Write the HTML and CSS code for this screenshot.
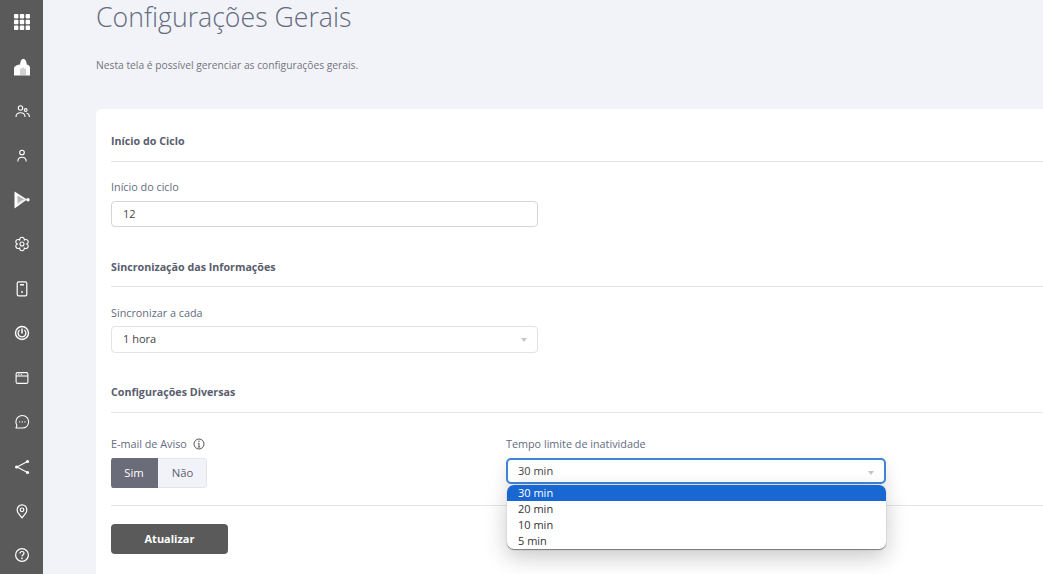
FILE: index.html
```html
<html>
<head>
    <title>Configurações Gerais</title>
    <link rel="stylesheet" href="styles.css">
</head>

<body>
    <nav class="sidebar">
        <a class="nav-item"><svg width="18" height="18" viewBox="0 0 18 18" fill="#fff"><rect x="1" y="1" width="4.4" height="4.4" rx=".8"/><rect x="6.8" y="1" width="4.4" height="4.4" rx=".8"/><rect x="12.6" y="1" width="4.4" height="4.4" rx=".8"/><rect x="1" y="6.8" width="4.4" height="4.4" rx=".8"/><rect x="6.8" y="6.8" width="4.4" height="4.4" rx=".8"/><rect x="12.6" y="6.8" width="4.4" height="4.4" rx=".8"/><rect x="1" y="12.6" width="4.4" height="4.4" rx=".8"/><rect x="6.8" y="12.6" width="4.4" height="4.4" rx=".8"/><rect x="12.6" y="12.6" width="4.4" height="4.4" rx=".8"/></svg></a>
        <a class="nav-item"><svg width="18" height="18" viewBox="0 0 18 18" fill="#fff"><path d="M1 17.5V10C1 8.5 3 7 7 6.5C7.3 3 8.5 .7 10.3 .7C12.2 .7 13.5 3 13.8 6.5C16 7 17 8 17 10V17.5Z"/><path d="M7.6 17.5V10.5H8.4V17.5ZM9.6 17.5V9.5H10.4V17.5ZM11.6 17.5V10.5H12.4V17.5Z" fill="#8f8f8f"/></svg></a>
        <a class="nav-item"><svg width="18" height="18" viewBox="0 0 18 18" fill="none" stroke="#fff" stroke-width="1.1"><circle cx="7.5" cy="6" r="2.2"/><path d="M3 15C3 12.2 5 10.8 7.5 10.8C10 10.8 12 12.2 12 15"/><circle cx="12.7" cy="8" r="1.4"/><path d="M13.5 11.2C15.4 11.4 16.4 12.8 16.4 15"/></svg></a>
        <a class="nav-item"><svg width="18" height="18" viewBox="0 0 18 18" fill="none" stroke="#fff" stroke-width="1.1"><circle cx="9" cy="5.5" r="2.3"/><path d="M4.8 14.5C4.8 11.6 6.5 10.2 9 10.2C11.5 10.2 13.2 11.6 13.2 14.5"/></svg></a>
        <a class="nav-item"><svg width="18" height="18" viewBox="0 0 18 18" fill="#fff"><path d="M1.5 .5L14 8.5L1.5 17.5Z"/><path d="M4.5 4.5L12 8.8L4.5 13.5Z" fill="#b5b5b5"/><path d="M4.5 12.5L11 8.8" stroke="#fff" stroke-width=".8"/><circle cx="15" cy="8.8" r="1.7"/></svg></a>
        <a class="nav-item"><svg width="18" height="18" viewBox="0 0 18 18" fill="none" stroke="#fff" stroke-width="1.1"><path d="M11.2 5.2A2.3 2.3 0 1 1 13.4 9A2.3 2.3 0 1 1 11.2 12.8A2.3 2.3 0 1 1 6.8 12.8A2.3 2.3 0 1 1 4.6 9A2.3 2.3 0 1 1 6.8 5.2A2.3 2.3 0 1 1 11.2 5.2Z" stroke-linejoin="round"/><circle cx="9" cy="9" r="2"/></svg></a>
        <a class="nav-item"><svg width="18" height="18" viewBox="0 0 18 18" fill="none" stroke="#fff" stroke-width="1.2"><rect x="4.2" y="1.8" width="9.6" height="14" rx="1.4"/><path d="M7 4.8H11" stroke-width="1.5"/><circle cx="9" cy="12" r=".9" fill="#fff" stroke="none"/></svg></a>
        <a class="nav-item"><svg width="18" height="18" viewBox="0 0 18 18" fill="none" stroke="#fff"><circle cx="9" cy="9" r="6.5" stroke-width="1.4"/><path d="M6.6 6A3.9 3.9 0 1 0 11.4 6" stroke-width="1.3"/><path d="M9 4.6V9.6" stroke-width="1.5"/></svg></a>
        <a class="nav-item"><svg width="18" height="18" viewBox="0 0 18 18" fill="none" stroke="#fff" stroke-width="1.1"><rect x="3.1" y="3.6" width="11.8" height="10.8" rx="1.5"/><path d="M3.1 7H14.9"/><path d="M5 5.3H6.5M7.6 5.3H9.2" stroke-width=".9"/></svg></a>
        <a class="nav-item"><svg width="18" height="18" viewBox="0 0 18 18" fill="none" stroke="#fff" stroke-width="1.1"><path d="M9.3 2.5C13 2.5 15.6 5.2 15.6 8.8C15.6 12.4 13 15 9.3 15H3L3.9 12.3C3.2 11.2 2.9 10.1 2.9 8.8C2.9 5.2 5.7 2.5 9.3 2.5Z" stroke-linejoin="round"/><path d="M6.2 8.8H7.2M8.8 8.8H9.8M11.4 8.8H12.4" stroke-width="1.3"/></svg></a>
        <a class="nav-item"><svg width="18" height="18" viewBox="0 0 18 18" fill="#fff" stroke="#fff"><path d="M14.5 3.5L4 9L14.5 14.5" fill="none" stroke-width="1.1"/><circle cx="14.5" cy="3.5" r="1.6" stroke="none"/><circle cx="3.6" cy="9" r="1.6" stroke="none"/><circle cx="14.5" cy="14.5" r="1.6" stroke="none"/></svg></a>
        <a class="nav-item"><svg width="18" height="18" viewBox="0 0 18 18" fill="none" stroke="#fff" stroke-width="1.2"><path d="M9 15.8L5.6 11.6C4.7 10.5 4.2 9.4 4.2 7.9C4.2 5 6.3 2.8 9 2.8C11.7 2.8 13.8 5 13.8 7.9C13.8 9.4 13.3 10.5 12.4 11.6Z" stroke-linejoin="round"/><circle cx="9" cy="7.8" r="1.8"/></svg></a>
        <a class="nav-item"><svg width="18" height="18" viewBox="0 0 18 18" fill="none" stroke="#fff" stroke-width="1.2"><circle cx="9" cy="9" r="6.4"/><path d="M7 7.4C7 6.2 7.9 5.5 9 5.5C10.1 5.5 11 6.2 11 7.3C11 8.7 9 8.7 9 10.4"/><circle cx="9" cy="12.3" r=".9" fill="#fff" stroke="none"/></svg></a>
    </nav>

    <main class="content">
        <h1 class="page-title">Configurações Gerais</h1>
        <p class="page-desc">Nesta tela é possível gerenciar as configurações gerais.</p>

        <div class="card">
            <h2 class="section-title first">Início do Ciclo</h2>
            <label class="field-label">Início do ciclo</label>
            <div class="input">12</div>

            <h2 class="section-title sync">Sincronização das Informações</h2>
            <label class="field-label sync">Sincronizar a cada</label>
            <div class="input select-box">1 hora <span class="caret"></span></div>

            <h2 class="section-title misc">Configurações Diversas</h2>
            <div class="two-cols">
                <div>
                    <label class="field-label">E-mail de Aviso
                        <svg class="info" width="12" height="12" viewBox="0 0 12 12" fill="none" stroke="#555"><circle cx="6" cy="6" r="5"/><path d="M6 5.2V9M4.8 9H7.2M5 5.2H6"/><circle cx="6" cy="3.3" r=".7" fill="#555" stroke="none"/></svg>
                    </label>
                    <div class="toggle">
                        <span class="toggle-opt active">Sim</span>
                        <span class="toggle-opt">Não</span>
                    </div>
                </div>
                <div class="timeout">
                    <label class="field-label">Tempo limite de inatividade</label>
                    <div class="input select-box open">30 min <span class="caret"></span></div>
                    <ul class="dropdown">
                        <li class="selected">30 min</li>
                        <li>20 min</li>
                        <li>10 min</li>
                        <li>5 min</li>
                    </ul>
                </div>
            </div>
            <hr class="divider">
            <button class="btn-update">Atualizar</button>
        </div>
    </main>
</body>
</html>
```

FILE: styles.css
```css
html, body {
    height: 100%;
}

body {
    margin: 0;
    display: flex;
    overflow: hidden;
    background-color: #f2f3f8;
    font-family: "Open Sans", sans-serif;
    font-size: 11px;
    color: #444;
}

.sidebar {
    width: 43px;
    flex-shrink: 0;
    background-color: #5a5a5a;
    display: flex;
    flex-direction: column;
}

.nav-item {
    height: 44.45px;
    flex-shrink: 0;
    display: flex;
    align-items: center;
    justify-content: center;
}

.content {
    flex: 1;
    min-width: 0;
    padding-left: 53px;
    overflow: hidden;
}

.page-title {
    margin: 0;
    font-size: 26.7px;
    line-height: 33px;
    font-weight: 300;
    color: #646c7e;
}

.page-desc {
    margin: 24px 0 0;
    font-size: 10.27px;
    line-height: 16px;
    color: #74747c;
}

.card {
    margin-top: 36px;
    height: 600px;
    padding: 22px 0 0 15px;
    box-sizing: border-box;
    background-color: #fff;
    border-radius: 6px 0 0 0;
}

.section-title {
    margin: 0;
    padding-top: 1px;
    padding-bottom: 10px;
    border-bottom: 1px solid #e4e5e9;
    font-size: 10.7px;
    line-height: 19px;
    font-weight: 700;
    color: #595d6e;
}

.section-title.sync {
    margin-top: 30px;
    padding-bottom: 9px;
}

.section-title.misc {
    margin-top: 29px;
}

.field-label {
    display: block;
    margin-top: 17px;
    margin-bottom: 6px;
    font-size: 10.8px;
    line-height: 16px;
    color: #646c7e;
}

.field-label.sync {
    margin-top: 18px;
    margin-bottom: 5px;
}

.info {
    margin-left: 3px;
    vertical-align: -2px;
}

.input {
    width: 427px;
    height: 26px;
    box-sizing: border-box;
    border: 1px solid #d4d5da;
    border-radius: 4px;
    padding-left: 11px;
    line-height: 24px;
    font-size: 11px;
    color: #444;
    position: relative;
    background-color: #fff;
}

.select-box {
    height: 27px;
    border-color: #e2e3e9;
}

.caret {
    position: absolute;
    right: 10px;
    top: 11px;
    border-left: 3.5px solid transparent;
    border-right: 3.5px solid transparent;
    border-top: 4px solid #c4c6cf;
}

.two-cols {
    display: grid;
    grid-template-columns: 395px 380px;
    margin-top: 6px;
}

.timeout {
    position: relative;
}

.timeout .input {
    width: 380px;
    height: 26px;
    border: 2px solid #3f83d4;
    line-height: 21px;
    padding-left: 10px;
    border-radius: 5px;
    box-shadow: 0 6px 16px rgba(0, 0, 0, 0.12);
}

.dropdown {
    position: absolute;
    left: 1px;
    width: 379px;
    margin: 1px 0 0;
    padding: 0;
    list-style: none;
    background-color: #fff;
    border-radius: 7px;
    box-shadow: 0 1px 1px rgba(0, 0, 0, 0.45), 0 8px 22px rgba(0, 0, 0, 0.22);
    overflow: hidden;
    z-index: 2;
}

.dropdown li {
    height: 16px;
    line-height: 16px;
    padding-left: 11px;
    font-size: 11px;
    color: #333;
}

.dropdown li.selected {
    background-color: #1967d2;
    color: #fff;
}

.toggle {
    display: inline-flex;
    height: 30px;
    border-radius: 3px;
    overflow: hidden;
    vertical-align: top;
}

.toggle-opt {
    width: 47px;
    line-height: 28px;
    text-align: center;
    font-size: 11.3px;
    color: #595d6e;
    background-color: #f2f3f8;
    box-sizing: border-box;
    border: 1px solid #e4e5ea;
    border-left: 0;
}

.toggle-opt:last-child {
    width: 49px;
    padding-left: 1px;
    border-radius: 0 3px 3px 0;
}

.toggle-opt.active {
    background-color: #6b6c7a;
    border-color: #6b6c7a;
    color: #fff;
}

.divider {
    margin: 17px 0 0;
    border: 0;
    border-top: 1px solid #e4e5e9;
}

.btn-update {
    display: block;
    margin-top: 18px;
    width: 117px;
    height: 30px;
    padding: 0 0 2px;
    border: 0;
    border-radius: 4px;
    background-color: #5a5a5a;
    color: #fff;
    font-family: "Open Sans", sans-serif;
    font-size: 11px;
    font-weight: 700;
}
```
